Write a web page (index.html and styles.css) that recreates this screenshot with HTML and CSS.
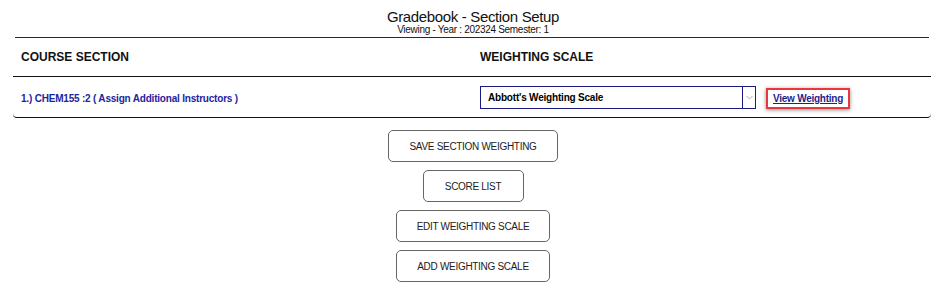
FILE: index.html
```html
<!DOCTYPE html>
<html lang="en">
<head>
  <meta charset="UTF-8" />
  <title>Gradebook - Section Setup</title>
  <link rel="stylesheet" href="styles.css">
</head>
<body>
  <header class="page-head">
    <h1>Gradebook - Section Setup</h1>
    <p class="viewing">Viewing - Year : 202324 Semester: 1</p>
  </header>
  <div class="head-rule"></div>

  <section class="sections">
    <div class="row head-row">
      <div class="cell">COURSE SECTION</div>
      <div class="cell">WEIGHTING SCALE</div>
    </div>
    <div class="row body-row">
      <div class="cell">
        <a class="course-link" href="#">1.) CHEM155 :2 ( Assign Additional Instructors )</a>
      </div>
      <div class="cell scale-cell">
        <div class="scale-select">
          <span class="scale-value">Abbott's Weighting Scale</span>
          <span class="scale-arrow">
            <svg width="7" height="5" viewBox="0 0 7 5"><polyline points="0.5,1 3.5,4 6.5,1" fill="none" stroke="#b0b0b0" stroke-width="1"/></svg>
          </span>
        </div>
        <a class="view-weighting" href="#">View Weighting</a>
      </div>
    </div>
  </section>

  <div class="actions">
    <button class="btn">SAVE SECTION WEIGHTING</button>
    <button class="btn">SCORE LIST</button>
    <button class="btn">EDIT WEIGHTING SCALE</button>
    <button class="btn">ADD WEIGHTING SCALE</button>
  </div>
</body>
</html>
```

FILE: styles.css
```css
html, body {
  margin: 0;
  padding: 0;
  background: #ffffff;
  font-family: 'Liberation Sans', Arial, sans-serif;
  color: #111;
}

.page-head {
  text-align: center;
  padding-top: 8px;
}

.page-head h1 {
  margin: 0;
  font-size: 15px;
  line-height: 17px;
  font-weight: normal;
  letter-spacing: -0.35px;
  color: #111;
}

.page-head .viewing {
  margin: 0;
  font-size: 10px;
  line-height: 10px;
  letter-spacing: -0.3px;
  color: #111;
}

.head-rule {
  height: 1px;
  background: #1f1f73;
  margin: 2px 17px 0 15px;
}

.sections {
  margin: 0 15px 0 13px;
  border-bottom: 1px solid #111;
  border-radius: 0 0 4px 4px;
}

.row {
  display: grid;
  grid-template-columns: 1fr 1fr;
  align-items: center;
}

.cell {
  padding: 0 8px;
}

.head-row {
  height: 38px;
  border-bottom: 1px solid #111;
  font-size: 12px;
  font-weight: bold;
}

.body-row {
  height: 40px;
}

.course-link {
  color: #2424a0;
  font-size: 10px;
  font-weight: bold;
  letter-spacing: -0.2px;
  text-decoration: none;
}

.scale-cell {
  display: flex;
  align-items: center;
}

.scale-select {
  display: flex;
  align-items: stretch;
  width: 276px;
  height: 23px;
  box-sizing: border-box;
  border: 1px solid #1a1a80;
  background: #fff;
}

.scale-value {
  flex: 1;
  display: flex;
  align-items: center;
  padding-left: 7px;
  font-size: 10px;
  font-weight: bold;
  letter-spacing: -0.2px;
  color: #000;
}

.scale-arrow {
  width: 12px;
  border-left: 1px solid #1a1a80;
  display: flex;
  align-items: center;
  justify-content: center;
}

.view-weighting {
  margin-left: 10px;
  margin-top: 3px;
  padding: 2px 5px;
  border: 2px solid #e8383d;
  box-shadow: 0 1px 4px rgba(0, 0, 0, 0.45);
  font-size: 10px;
  line-height: 13px;
  font-weight: bold;
  letter-spacing: -0.25px;
  color: #1f1f8a;
  text-decoration: underline;
}

.actions {
  display: flex;
  flex-direction: column;
  align-items: center;
  gap: 8px;
  margin-top: 12px;
}

.btn {
  height: 32px;
  min-width: 101px;
  padding: 0 20px;
  background: #fff;
  border: 1px solid #666;
  border-radius: 5px;
  font-family: 'Liberation Sans', Arial, sans-serif;
  font-size: 10px;
  letter-spacing: -0.3px;
  color: #222;
}
```
